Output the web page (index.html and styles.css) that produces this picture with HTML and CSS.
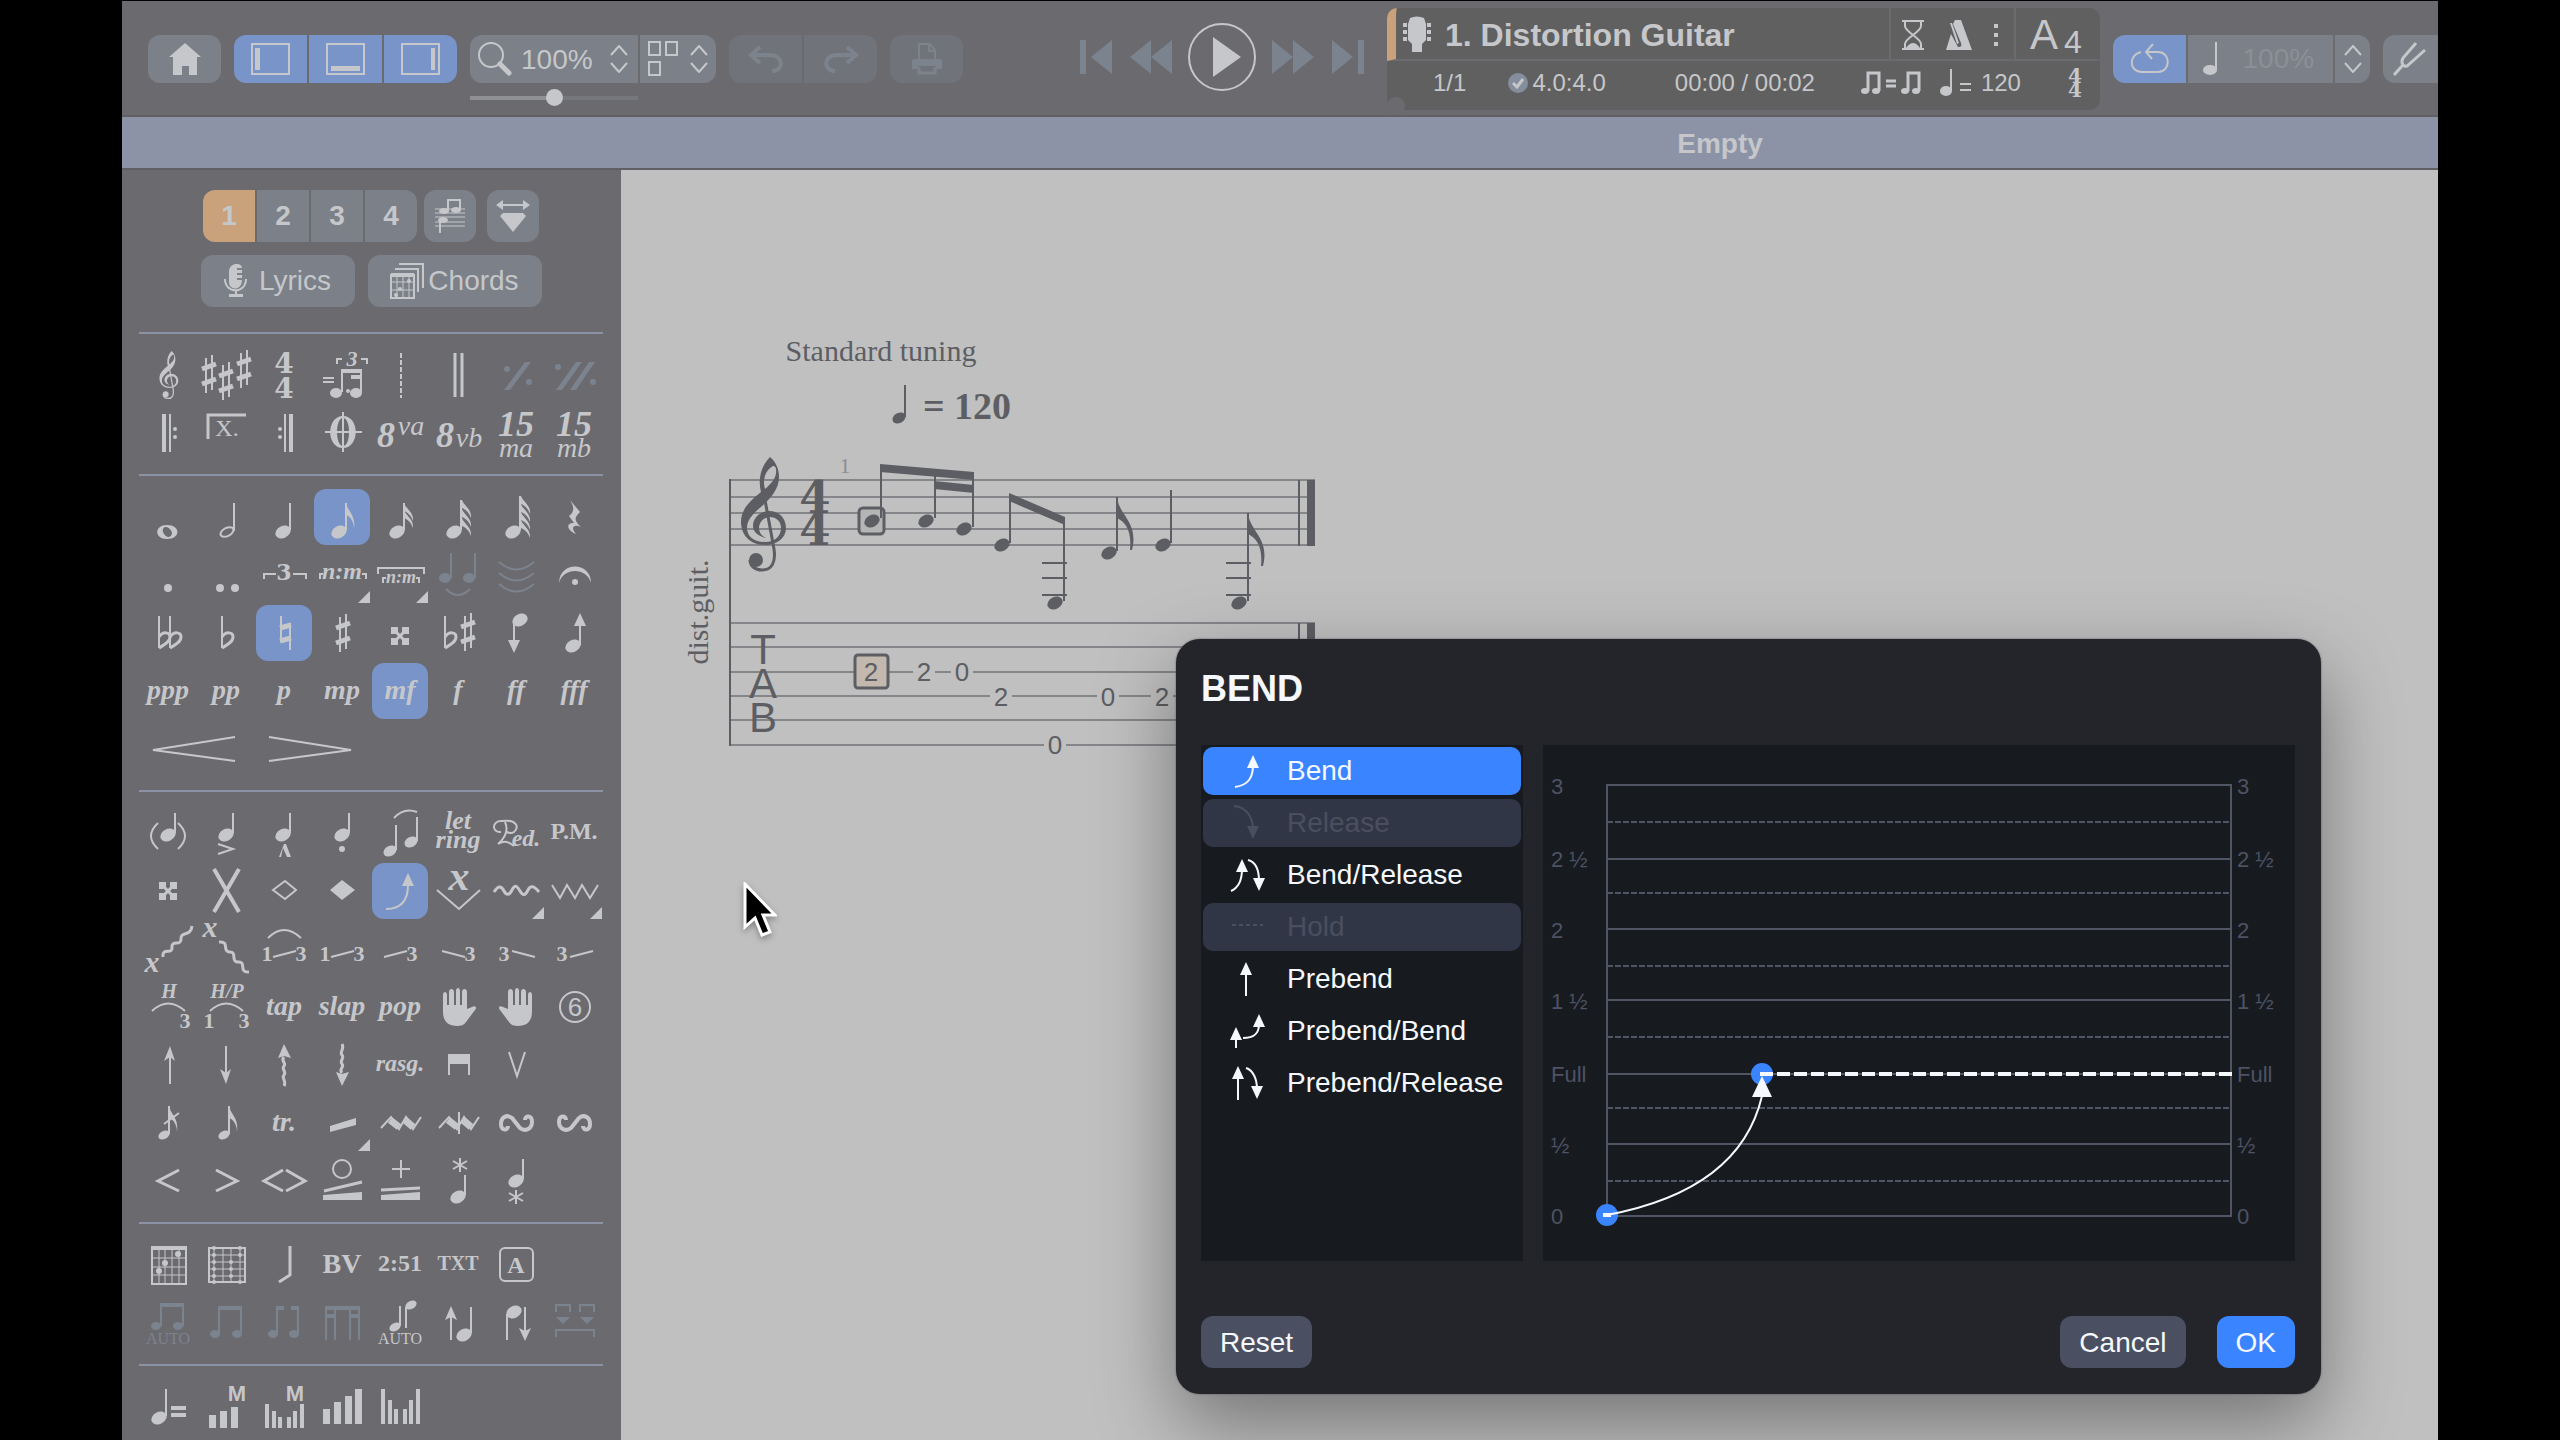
FILE: index.html
```html
<!DOCTYPE html>
<html lang="en">
<head>
    <meta charset="UTF-8">
    <meta name="viewport" content="width=device-width, initial-scale=1.0">
    <title>Empty</title>
    <link rel="stylesheet" href="styles.css">
</head>
<body>
    <!-- Shared note shapes -->
    <svg class="sprite" width="0" height="0">
        <defs>
            <ellipse id="head" class="f" rx="8" ry="6" transform="rotate(-28)"/>
            <g id="q"><use href="#head"/><path d="M7 -2V-29"/></g>
            <g id="qs"><use href="#head"/><path d="M7 -2V-22"/></g>
            <path id="flag" class="f" d="M0 0C2 9 10 12 8 26C8 17 3 13 0 12Z"/>
            <path id="flag-s" class="f" d="M0 0C2 6 10 9 9 18C7 12 3 9 0 8Z"/>
            <g id="sharp"><path d="M-3 -16V19M3 -19V16"/><path stroke-width="5" d="M-7 -5L7 -10M-7 10L7 5"/></g>
            <g id="flat"><path d="M0 -32V0"/><path stroke-width="3" d="M0 -11C4 -17 11 -16 11 -11C11 -6 5 -3 0 0"/></g>
            <g id="dsharp"><path stroke-width="3" d="M-6 -6L6 6M-6 6L6 -6"/><path class="f" d="M-9 -9h7v5l-3 2h-4zM9 -9h-7v5l3 2h4zM-9 9h7v-5l-3 -2h-4zM9 9h-7v-5l3 -2h4z"/></g>
            <path id="up" class="f" d="M0 0L-6 13H6Z"/>
            <path id="down" class="f" d="M0 0L-6 -13H6Z"/>
            <path id="corner" class="f" d="M44 56H56V44Z"/>
            <path id="star" d="M0 -7V7M-7 -4L7 4M-7 4L7 -4"/>
            <path id="hand" class="f" d="M13 16c0-4 4-4 4 0v10h2v-13c0-4 5-4 5 0v13h2v-14c0-4 4-4 4 0v14h2v-13c0-4 5-4 5 0v17l5-2c4-2 5 1 3 3l-9 12c-2 3-5 4-9 4c-9 0-14-5-14-14z"/>
            <path id="turn" stroke-width="4" d="M20 25C20 20 13 20 13 27C13 34 20 37 25 33L33 23C38 19 44 22 44 29C44 36 37 36 37 31"/>
            <g id="mordent"><path d="M9 33L19 22L27 34L34 22L41 34L49 22"/><path stroke-width="7" d="M18 25L27 32M33 25L41 32"/></g>
            <g id="clef">
                <path class="f" fill-rule="evenodd" d="M30 0C36 5 39 12 39 20C39 32 31 41 22 49C14 56 7 62 7 71C7 80 15 85 25 85C36 85 41 78 41 71C41 64 36 60 30 60C24 60 19 65 19 71C19 76 22 79 26 81C18 79 13 75 13 69C13 61 20 54 29 54C39 54 46 61 46 71C46 81 37 88 25 88C10 88 1 78 1 65C1 52 10 44 21 35C18 24 20 10 30 0ZM33 9C26 13 22 22 25 32C32 26 37 20 36 13C36 10 35 9 33 9Z"/>
                <path stroke-width="3" d="M23 32L34 92C36 105 32 113 22 113C15 113 10 109 10 103"/>
                <circle class="f" cx="16" cy="103" r="7"/>
            </g>
            <path id="chevrons" d="M2 10L10 1L18 10M2 18L10 27L18 18"/>
        </defs>
    </svg>

    <div class="app">
        <header class="toolbar">
            <button class="btn home" aria-label="Home">
                <svg width="34" height="34"><path class="f" d="M17 1L33 15H29V33H21V24H14V33H5V15H1Z"/></svg>
            </button>
            <div class="group">
                <button class="btn on" aria-label="Palette"><svg width="40" height="32"><path d="M1 1H38V31H1Z"/><path class="f" d="M4 5H9V27H4Z"/></svg></button>
                <button class="btn on" aria-label="Tracks"><svg width="40" height="32"><path d="M1 1H38V31H1Z"/><path class="f" d="M5 23H34V28H5Z"/></svg></button>
                <button class="btn on" aria-label="Inspector"><svg width="40" height="32"><path d="M1 1H38V31H1Z"/><path class="f" d="M30 5H34V27H30Z"/></svg></button>
            </div>
            <div class="zoom">
                <div class="group">
                    <label class="btn zoom-level">
                        <svg width="36" height="36"><circle cx="14" cy="14" r="12"/><path stroke-width="5" stroke-linecap="round" d="M23 23L32 32"/></svg>
                        <select aria-label="Zoom"><option>100%</option></select>
                        <svg width="20" height="28"><use href="#chevrons"/></svg>
                    </label>
                    <button class="btn layout" aria-label="Page layout">
                        <svg width="30" height="36"><path d="M1 1H12V14H1ZM18 1H29V14H18ZM1 21H12V34H1Z"/></svg>
                        <svg width="20" height="28"><use href="#chevrons"/></svg>
                    </button>
                </div>
                <input type="range" aria-label="Zoom slider" value="50">
            </div>
            <div class="group">
                <button class="btn off" aria-label="Undo" disabled><svg width="36" height="28"><path stroke-width="4" d="M12 2L3 10L12 18M3 10H22C36 10 36 26 24 26"/></svg></button>
                <button class="btn off" aria-label="Redo" disabled><svg width="36" height="28"><path stroke-width="4" d="M24 2L33 10L24 18M33 10H14C0 10 0 26 12 26"/></svg></button>
            </div>
            <button class="btn off print" aria-label="Print" disabled>
                <svg width="32" height="32"><path d="M8 16V1H19L24 7V16M18 1V8H24"/><path class="f" d="M3 16H29Q31 16 31 18V26H25V23H7V26H1V18Q1 16 3 16Z"/><path stroke-width="3" d="M8 24V30H24V24"/></svg>
            </button>

            <div class="transport">
                <button aria-label="First bar"><svg width="34" height="36"><path class="f" d="M1 1H7V35H1ZM33 1V35L12 18Z"/></svg></button>
                <button aria-label="Rewind"><svg width="42" height="36"><path class="f" d="M21 1V35L0 18ZM42 1V35L21 18Z"/></svg></button>
                <button class="play" aria-label="Play"><svg width="70" height="70"><circle cx="35" cy="35" r="33"/><path class="f" d="M26 15V55L54 35Z"/></svg></button>
                <button aria-label="Forward"><svg width="42" height="36"><path class="f" d="M0 1V35L21 18ZM21 1V35L42 18Z"/></svg></button>
                <button aria-label="Last bar"><svg width="34" height="36"><path class="f" d="M27 1H33V35H27ZM1 1V35L22 18Z"/></svg></button>
            </div>

            <div class="display">
                <div class="track">
                    <svg class="guitar" width="28" height="36"><path class="f" d="M7 2Q14 -1 21 2L23 8V24L19 28V36H9V28L5 24V8ZM0 7H4V11H0ZM0 14H4V18H0ZM0 21H4V25H0ZM24 7H28V11H24ZM24 14H28V18H24ZM24 21H28V25H24Z"/></svg>
                    <h1>1. Distortion Guitar</h1>
                    <div class="options">
                        <svg width="24" height="32"><path d="M1 2H23M1 30H23M4 2V7C4 13 20 19 20 25V30M20 2V7C20 13 4 19 4 25V30"/><path class="f" d="M5 29Q12 19 19 29Z"/></svg>
                        <svg width="28" height="32"><path class="f" fill-rule="evenodd" d="M10 1H16L27 31H1L6 15L13 28C16 28 17 27 16 24L8 5ZM5 4L7 4L14 24L12 25Z"/></svg>
                        <svg width="6" height="24"><path class="f" d="M1 1h4v4h-4zM1 10h4v4h-4zM1 19h4v4h-4z"/></svg>
                    </div>
                    <div class="pitch">A<sub>4</sub></div>
                </div>
                <div class="status">
                    <span class="bar">1/1</span>
                    <svg width="22" height="20"><circle class="check" cx="11" cy="10" r="10"/><path stroke-width="3" d="M6 10L10 14L16 6"/></svg>
                    <span class="beat">4.0:4.0</span>
                    <span class="time">00:00 / 00:02</span>
                    <svg class="swing" width="62" height="26"><path stroke-width="3" d="M7 21V3H18V21M47 21V3H58V21M25 11H35M25 16H35"/><g class="f"><ellipse cx="4" cy="21" rx="4" ry="3"/><ellipse cx="15" cy="21" rx="4" ry="3"/><ellipse cx="44" cy="21" rx="4" ry="3"/><ellipse cx="55" cy="21" rx="4" ry="3"/></g></svg>
                    <svg width="32" height="28"><ellipse class="f" cx="6" cy="22" rx="6" ry="5"/><path d="M11 22V0M20 15H31M20 21H31"/></svg>
                    <span class="tempo">120</span>
                    <span class="meter">4<br>4</span>
                </div>
                <i class="grip"></i>
            </div>

            <div class="group speed">
                <button class="btn on" aria-label="Loop"><svg width="40" height="40"><path d="M11 13C-2 16 -1 33 12 33H28C41 33 41 13 28 13H16M23 5L16 13L22 20"/></svg></button>
                <label class="btn rate"><svg width="18" height="36"><ellipse class="f" cx="7" cy="29" rx="7" ry="5"/><path d="M13 29V1"/></svg><input type="text" aria-label="Speed" value="100%"></label>
                <button class="btn step" aria-label="Change speed"><svg width="20" height="28"><use href="#chevrons"/></svg></button>
            </div>
            <button class="btn tuner" aria-label="Tuner"><svg width="36" height="36"><path stroke-width="3" d="M1 34L10 24M23 2L10 17C8 21 9 26 14 25L32 9"/></svg></button>
        </header>

        <div class="titlebar">Empty</div>

        <main>
            <aside class="palette">
                <div class="voices">
                    <div class="group">
                        <button class="btn voice active">1</button>
                        <button class="btn voice">2</button>
                        <button class="btn voice">3</button>
                        <button class="btn voice">4</button>
                    </div>
                    <button class="btn square" aria-label="Multivoice"><svg width="32" height="36"><path stroke-width="1" d="M1 11H31M1 15H31M1 19H31M1 24H31M1 28H31"/><path d="M14 13V2H26V12M6 35V24L11 22"/><g class="f"><ellipse cx="10" cy="13" rx="5" ry="3"/><ellipse cx="22" cy="12" rx="5" ry="3"/><ellipse cx="9" cy="22" rx="5" ry="3"/></g></svg></button>
                    <button class="btn square design" aria-label="Design mode"><svg width="34" height="32"><path d="M3 5H31"/><path class="f" d="M0 5L7 0V10ZM34 5L27 0V10ZM7 13H27L30 16L17 32L4 16Z"/></svg></button>
                </div>
                <div class="texts">
                    <button class="btn lyrics"><svg width="24" height="34"><path class="f" d="M5 8C5 -2 18 -2 18 4H13V6H18V9H13V11H18V14H13V16H18C18 27 5 27 5 18ZM5 30H19V33H5Z"/><path d="M1 15C1 30 22 30 22 15M12 26V31"/></svg>Lyrics</button>
                    <button class="btn chords"><svg width="34" height="36"><path stroke-width="1" d="M7 12V35M13 12V35M19 12V35M1 19H24M1 27H24"/><path d="M1 12H24V35H1ZM5 6H28V29M9 1H33V25"/><path class="f" d="M1 10H24V14H1Z"/><g class="f"><circle cx="19" cy="18" r="2"/><circle cx="10" cy="26" r="2"/><circle cx="6" cy="32" r="2"/></g></svg>Chords</button>
                </div>

                <section>
                    <button class="tool" title="Clef"><svg><use href="#clef" transform="translate(19 4) scale(.42)"/></svg></button>
                    <button class="tool" title="Key signature"><svg><use href="#sharp" x="11" y="27"/><use href="#sharp" x="28" y="34"/><use href="#sharp" x="46" y="22"/></svg></button>
                    <button class="tool" title="Time signature"><svg><text class="num" x="28" y="26">4</text><text class="num" x="28" y="51">4</text></svg></button>
                    <button class="tool" title="Triplet feel"><svg><path d="M9 31H20M9 35H20M23 17V12H28M53 17V12H47M28 45V24M47 45V24"/><path stroke-width="4" d="M27 24H48M37 30H48"/><ellipse class="f" cx="22" cy="46" rx="6" ry="5"/><ellipse class="f" cx="42" cy="46" rx="6" ry="5"/><circle class="f" cx="34" cy="44" r="2"/><text class="bi s22" x="38" y="19">3</text></svg></button>
                    <button class="tool" title="Free time"><svg><path stroke-dasharray="5 2" d="M29 6V51"/></svg></button>
                    <button class="tool" title="Double bar"><svg><path stroke-width="3" d="M25 6V50M32 6V50"/></svg></button>
                    <button class="tool" title="Simile mark" disabled><svg><path class="f" d="M16 43H22L43 15H37Z"/><circle class="f" cx="19" cy="22" r="3"/><circle class="f" cx="41" cy="35" r="3"/></svg></button>
                    <button class="tool" title="Double simile mark" disabled><svg><path class="f" d="M10 43H16L36 15H30ZM24 43H30L49 15H43Z"/><circle class="f" cx="12" cy="20" r="3"/><circle class="f" cx="47" cy="35" r="3"/></svg></button>

                    <button class="tool" title="Repeat open"><svg><path class="f" d="M22 9H26V47H22Z"/><path d="M30 9V47"/><circle class="f" cx="35" cy="24" r="2"/><circle class="f" cx="35" cy="32" r="2"/></svg></button>
                    <button class="tool" title="Alternate ending"><svg><path stroke-width="3" d="M10 34V10H48"/><text class="rm s24" x="29" y="31">X.</text></svg></button>
                    <button class="tool" title="Repeat close"><svg><path class="f" d="M33 9H37V47H33Z"/><path d="M29 9V47"/><circle class="f" cx="24" cy="24" r="2"/><circle class="f" cx="24" cy="32" r="2"/></svg></button>
                    <button class="tool" title="Coda"><svg><path class="f" fill-rule="evenodd" d="M29 11C46 11 46 43 29 43C12 43 12 11 29 11ZM29 13C21 13 21 41 29 41C37 41 37 13 29 13Z"/><path d="M11 27H48M29 7V47"/></svg></button>
                    <button class="tool" title="Octave up"><svg><text class="bi s36" x="14" y="42">8</text><text class="it s28" x="39" y="30">va</text></svg></button>
                    <button class="tool" title="Octave down"><svg><text class="bi s36" x="15" y="42">8</text><text class="it s28" x="39" y="42">vb</text></svg></button>
                    <button class="tool" title="Two octaves up"><svg><text class="bi s36" x="28" y="31">15</text><text class="it s28" x="28" y="52">ma</text></svg></button>
                    <button class="tool" title="Two octaves down"><svg><text class="bi s36" x="28" y="31">15</text><text class="it s28" x="28" y="52">mb</text></svg></button>
                </section>

                <section>
                    <button class="tool" title="Whole"><svg><path class="f" fill-rule="evenodd" d="M27 36C41 36 41 50 27 50C14 50 14 36 27 36ZM25 38C20 40 24 48 29 48C35 46 31 38 25 38Z"/></svg></button>
                    <button class="tool" title="Half"><svg><ellipse cx="29" cy="43" rx="7" ry="4" transform="rotate(-28 29 43)"/><path d="M36 42V14"/></svg></button>
                    <button class="tool" title="Quarter"><svg><use href="#q" x="27" y="43"/></svg></button>
                    <button class="tool on" title="Eighth"><svg><use href="#q" x="25" y="43"/><use href="#flag" x="32" y="14"/></svg></button>
                    <button class="tool" title="Sixteenth"><svg><use href="#q" x="25" y="43"/><use href="#flag-s" x="32" y="14"/><use href="#flag-s" x="32" y="21"/></svg></button>
                    <button class="tool" title="Thirty-second"><svg><use href="#q" x="24" y="43"/><path d="M31 41V11"/><use href="#flag-s" x="32" y="11"/><use href="#flag-s" x="32" y="20"/><use href="#flag-s" x="32" y="29"/></svg></button>
                    <button class="tool" title="Sixty-fourth"><svg><use href="#q" x="25" y="43"/><path d="M32 41V7"/><use href="#flag-s" x="33" y="7"/><use href="#flag-s" x="33" y="15"/><use href="#flag-s" x="33" y="23"/><use href="#flag-s" x="33" y="31"/></svg></button>
                    <button class="tool" title="Rest"><svg><path class="f" d="M24 11L34 23C28 29 28 31 35 38C28 35 24 38 30 45C20 41 20 33 28 34L23 27C29 22 28 18 24 11Z"/></svg></button>

                    <button class="tool" title="Dotted"><svg><circle class="f" cx="28" cy="41" r="4"/></svg></button>
                    <button class="tool" title="Double dotted"><svg><circle class="f" cx="22" cy="41" r="4"/><circle class="f" cx="37" cy="41" r="4"/></svg></button>
                    <button class="tool" title="Triplet"><svg><path stroke-width="2" d="M8 32V27H20M50 32V27H37"/><text class="num s22" x="28" y="33">3</text></svg></button>
                    <button class="tool" title="Tuplet"><svg><path d="M6 32V27H9M52 32V27H48"/><text class="bi s24" x="28" y="32">n:m</text><use href="#corner"/></svg></button>
                    <button class="tool" title="Tuplet bracket"><svg><path d="M6 27V21H52V27M11 36V31H14M47 36V31H44"/><text class="bi s18" x="29" y="36">n:m</text><use href="#corner"/></svg></button>
                    <button class="tool" title="Tie" disabled><svg><ellipse class="f" cx="15" cy="31" rx="6" ry="5"/><ellipse class="f" cx="39" cy="31" rx="6" ry="5"/><path d="M21 31V6M45 31V6M16 42Q28 54 40 42"/></svg></button>
                    <button class="tool" title="Tie all" disabled><svg><path d="M11 15Q28 30 46 15M11 26Q28 41 46 26M11 37Q28 52 46 37"/></svg></button>
                    <button class="tool" title="Fermata"><svg><path class="f" d="M13 36C13 14 45 14 45 36C41 20 17 20 13 36Z"/><circle class="f" cx="29" cy="35" r="3"/></svg></button>

                    <button class="tool" title="Double flat"><svg><use href="#flat" x="19" y="43"/><use href="#flat" x="30" y="43"/></svg></button>
                    <button class="tool" title="Flat"><svg><use href="#flat" x="24" y="43"/></svg></button>
                    <button class="tool on" title="Natural"><svg><path stroke-width="2" d="M25 11V37M34 18V45"/><path stroke-width="5" d="M24 23L35 20M24 36L35 33"/></svg></button>
                    <button class="tool" title="Sharp"><svg><use href="#sharp" x="29" y="28"/></svg></button>
                    <button class="tool" title="Double sharp"><svg><use href="#dsharp" x="28" y="31"/></svg></button>
                    <button class="tool" title="Enharmonic"><svg><use href="#flat" x="15" y="43"/><use href="#sharp" x="38" y="27"/></svg></button>
                    <button class="tool" title="Lower semitone"><svg><use href="#head" x="32" y="15"/><path d="M26 17V38"/><use href="#down" x="26" y="48"/></svg></button>
                    <button class="tool" title="Raise semitone"><svg><use href="#head" x="27" y="41"/><path d="M34 40V18"/><use href="#up" x="34" y="8"/></svg></button>

                    <button class="tool dyn">ppp</button>
                    <button class="tool dyn">pp</button>
                    <button class="tool dyn">p</button>
                    <button class="tool dyn">mp</button>
                    <button class="tool dyn on">mf</button>
                    <button class="tool dyn">f</button>
                    <button class="tool dyn">ff</button>
                    <button class="tool dyn">fff</button>

                    <button class="tool wide" title="Crescendo"><svg><path d="M95 16L13 29L95 40"/></svg></button>
                    <button class="tool wide" title="Decrescendo"><svg><path d="M13 16L95 29L13 40"/></svg></button>
                </section>

                <section>
                    <button class="tool" title="Ghost note"><svg><use href="#qs" x="28" y="30"/><path d="M18 18Q4 31 18 44M38 18Q52 31 38 44"/></svg></button>
                    <button class="tool" title="Accent"><svg><use href="#qs" x="28" y="30"/><path d="M20 39L35 44L20 49"/></svg></button>
                    <button class="tool" title="Heavy accent"><svg><use href="#qs" x="27" y="30"/><path class="f" d="M23 52L28 39H30L35 52H31L27 43L25 52Z"/></svg></button>
                    <button class="tool" title="Staccato"><svg><use href="#qs" x="28" y="30"/><circle class="f" cx="28" cy="44" r="3"/></svg></button>
                    <button class="tool" title="Legato"><svg><ellipse class="f" cx="18" cy="46" rx="7" ry="5" transform="rotate(-28 18 46)"/><ellipse class="f" cx="39" cy="37" rx="7" ry="5" transform="rotate(-28 39 37)"/><path d="M24 45V20M45 36V12M22 13Q32 2 45 7"/></svg></button>
                    <button class="tool" title="Let ring"><svg><text class="bi s26" x="28" y="24">let</text><text class="bi s26" x="28" y="43">ring</text></svg></button>
                    <button class="tool" title="Sustain pedal"><svg><path d="M13 27C3 28 4 15 14 16C28 14 32 22 26 27C23 29 19 27 19 27M17 17C21 26 17 33 10 39C17 35 21 37 26 41"/><text class="bi s24" x="38" y="41">ed.</text></svg></button>
                    <button class="tool bold s24">P.M.</button>

                    <button class="tool" title="Dead note"><svg><use href="#dsharp" x="28" y="28"/></svg></button>
                    <button class="tool" title="Dead slap"><svg><path stroke-width="4" d="M16 6L41 49M41 6L16 49"/></svg></button>
                    <button class="tool" title="Natural harmonic"><svg><path d="M17 27L29 18L40 27L29 36Z"/></svg></button>
                    <button class="tool" title="Artificial harmonic"><svg><path class="f" d="M16 27L28 17L41 27L28 37Z"/></svg></button>
                    <button class="tool on" title="Bend"><svg><path d="M14 46C30 46 36 36 36 22"/><use href="#up" x="36" y="10"/></svg></button>
                    <button class="tool" title="Whammy bar"><svg><text class="bi s42" x="29" y="27">x</text><path d="M7 27L29 46L50 27"/></svg></button>
                    <button class="tool" title="Vibrato"><svg><path stroke-width="3" d="M6 29C11 21 14 24 16 28S21 33 24 27S29 23 32 28S37 33 40 27S47 24 51 29"/><use href="#corner"/></svg></button>
                    <button class="tool" title="Wide vibrato"><svg><path d="M6 22L14 35L21 22L29 35L36 22L44 35L52 22"/><use href="#corner"/></svg></button>

                    <button class="tool" title="Slide in from below"><svg><text class="bi s30" x="12" y="51">x</text><path stroke-width="3" d="M23 36C22 26 32 34 32 27C31 18 41 26 41 18C40 10 51 16 52 5"/></svg></button>
                    <button class="tool" title="Slide out downwards"><svg><text class="bi s30" x="12" y="16">x</text><path stroke-width="3" d="M21 21C32 20 24 30 31 31C40 30 32 41 40 41C49 40 40 52 51 51"/></svg></button>
                    <button class="tool" title="Legato slide"><svg><path d="M12 17Q28 1 45 17M17 36L40 30"/><text class="bo s22" x="11" y="40">1</text><text class="bo s22" x="45" y="40">3</text></svg></button>
                    <button class="tool" title="Shift slide"><svg><path d="M17 36L40 30"/><text class="bo s22" x="11" y="40">1</text><text class="bo s22" x="45" y="40">3</text></svg></button>
                    <button class="tool" title="Slide in below"><svg><path d="M12 36L35 30"/><text class="bo s22" x="40" y="40">3</text></svg></button>
                    <button class="tool" title="Slide in above"><svg><path d="M12 30L35 36"/><text class="bo s22" x="40" y="40">3</text></svg></button>
                    <button class="tool" title="Slide out down"><svg><path d="M24 30L47 36"/><text class="bo s22" x="16" y="40">3</text></svg></button>
                    <button class="tool" title="Slide out up"><svg><path d="M24 36L47 30"/><text class="bo s22" x="16" y="40">3</text></svg></button>

                    <button class="tool" title="Hammer on"><svg><text class="bi s20" x="29" y="19">H</text><path d="M12 32Q28 17 45 32"/><text class="bo s22" x="45" y="49">3</text></svg></button>
                    <button class="tool" title="Hammer / pull"><svg><text class="bi s20" x="29" y="19">H/P</text><path d="M12 32Q28 17 45 32"/><text class="bo s22" x="11" y="49">1</text><text class="bo s22" x="46" y="49">3</text></svg></button>
                    <button class="tool dyn">tap</button>
                    <button class="tool dyn">slap</button>
                    <button class="tool dyn">pop</button>
                    <button class="tool" title="Left hand"><svg><use href="#hand"/></svg></button>
                    <button class="tool" title="Right hand"><svg><use href="#hand" transform="matrix(-1 0 0 1 57 0)"/></svg></button>
                    <button class="tool" title="String number"><svg><circle cx="29" cy="28" r="15"/><text class="sans s26" x="29" y="37">6</text></svg></button>

                    <button class="tool" title="Arpeggio up"><svg><path d="M30 47V18"/><path class="f" d="M30 9L24 24L30 20L35 24Z"/></svg></button>
                    <button class="tool" title="Arpeggio down"><svg><path d="M28 9V40"/><path class="f" d="M28 47L22 32L28 36L33 32Z"/></svg></button>
                    <button class="tool" title="Brush up"><svg><path class="f" d="M28 7L22 21L28 19L35 21Z"/><path stroke-width="3" d="M28 20C24 24 31 26 28 29S31 35 28 38S31 44 28 49"/></svg></button>
                    <button class="tool" title="Brush down"><svg><path class="f" d="M28 49L22 35L28 37L35 35Z"/><path stroke-width="3" d="M28 36C24 32 31 30 28 27S31 21 28 18S31 12 28 7"/></svg></button>
                    <button class="tool dyn s24">rasg.</button>
                    <button class="tool" title="Downstroke"><svg><path class="f" d="M18 17H40V38H38V27H20V38H18Z"/></svg></button>
                    <button class="tool" title="Upstroke"><svg><path stroke-width="2" d="M21 15L29 39L37 15"/></svg></button>
                    <span></span>

                    <button class="tool" title="Grace before beat"><svg><ellipse class="f" cx="24" cy="40" rx="6" ry="4" transform="rotate(-28 24 40)"/><path d="M29 39V11M24 29L39 18"/><use href="#flag" x="29" y="11"/></svg></button>
                    <button class="tool" title="Grace on beat"><svg><ellipse class="f" cx="26" cy="40" rx="6" ry="4" transform="rotate(-28 26 40)"/><path d="M31 39V11"/><use href="#flag" x="31" y="11"/></svg></button>
                    <button class="tool dyn">tr.</button>
                    <button class="tool" title="Tremolo picking"><svg><path class="f" d="M16 31L42 23V30L16 37Z"/><use href="#corner"/></svg></button>
                    <button class="tool" title="Upper mordent"><svg><use href="#mordent"/></svg></button>
                    <button class="tool" title="Lower mordent"><svg><use href="#mordent"/><path d="M29 17V39"/></svg></button>
                    <button class="tool" title="Turn"><svg><use href="#turn" transform="matrix(-1 0 0 1 57 0)"/></svg></button>
                    <button class="tool" title="Inverted turn"><svg><use href="#turn"/></svg></button>

                    <button class="tool" title="Fade in"><svg><path stroke-width="3" d="M39 17L18 28L39 38"/></svg></button>
                    <button class="tool" title="Fade out"><svg><path stroke-width="3" d="M18 17L39 28L18 38"/></svg></button>
                    <button class="tool" title="Volume swell"><svg><path stroke-width="3" d="M27 17L8 28L27 38M30 17L49 28L30 38"/></svg></button>
                    <button class="tool" title="Wah open"><svg><circle cx="28" cy="16" r="9"/><path stroke-width="3" d="M10 38L48 29"/><path class="f" d="M9 42L48 39V47H9Z"/></svg></button>
                    <button class="tool" title="Wah close"><svg><path d="M20 16H38M29 7V25"/><path stroke-width="3" d="M9 37L48 35"/><path class="f" d="M9 42L48 39V47H9Z"/></svg></button>
                    <button class="tool" title="Pedal up"><svg><use href="#star" x="30" y="12"/><use href="#qs" x="28" y="44"/></svg></button>
                    <button class="tool" title="Pedal down"><svg><use href="#star" x="28" y="44"/><use href="#qs" x="28" y="28"/></svg></button>
                </section>

                <section>
                    <button class="tool" title="Chord"><svg><path stroke-width="1" d="M12 21H46M12 30H46M12 38H46M19 12V47M25 12V47M32 12V47M39 12V47"/><path d="M12 10V47H46V10"/><path class="f" d="M11 9H47V13H11Z"/><g class="f"><circle cx="38" cy="17" r="3"/><circle cx="25" cy="26" r="3"/><circle cx="19" cy="34" r="3"/></g></svg></button>
                    <button class="tool" title="Scale"><svg><path stroke-width="1" d="M11 18H47M11 25H47M11 32H47M11 39H47M16 11V45M25 11V45M33 11V45M42 11V45"/><path d="M11 11H47V45H11Z"/><g class="f"><circle cx="16" cy="11" r="2"/><circle cx="16" cy="18" r="2"/><circle cx="16" cy="25" r="2"/><circle cx="16" cy="32" r="2"/><circle cx="16" cy="39" r="2"/><circle cx="16" cy="45" r="2"/><circle cx="33" cy="25" r="2"/><circle cx="33" cy="32" r="2"/><circle cx="33" cy="39" r="2"/><circle cx="42" cy="11" r="2"/><circle cx="42" cy="18" r="2"/><circle cx="42" cy="45" r="2"/></g></svg></button>
                    <button class="tool" title="Slash rhythm"><svg><path stroke-width="3" d="M34 9V38L23 45"/></svg></button>
                    <button class="tool bold s28">BV</button>
                    <button class="tool bold s24">2:51</button>
                    <button class="tool bold s20">TXT</button>
                    <button class="tool" title="Section"><svg><rect x="12" y="11" width="33" height="33" rx="5"/><text class="bo s24" x="28" y="36">A</text></svg></button>
                    <span></span>

                    <button class="tool" title="Automatic beaming" disabled><svg><ellipse class="f" cx="16" cy="31" rx="5" ry="4"/><ellipse class="f" cx="38" cy="31" rx="5" ry="4"/><path d="M21 31V10M43 31V10"/><path stroke-width="4" d="M20 10H44"/><text class="rm s16" x="28" y="49">AUTO</text></svg></button>
                    <button class="tool" title="Beam" disabled><svg><ellipse class="f" cx="17" cy="39" rx="5" ry="4"/><ellipse class="f" cx="39" cy="39" rx="5" ry="4"/><path d="M21 39V13M43 39V13"/><path stroke-width="4" d="M20 13H44"/></svg></button>
                    <button class="tool" title="Break beam" disabled><svg><ellipse class="f" cx="17" cy="39" rx="5" ry="4"/><ellipse class="f" cx="38" cy="39" rx="5" ry="4"/><path d="M21 39V13M42 39V13"/><path stroke-width="4" d="M20 13H28M35 13H43"/></svg></button>
                    <button class="tool" title="Break secondary beam" disabled><svg><path d="M12 12V45M21 12V45M36 12V45M45 12V45"/><path stroke-width="4" d="M11 13H46M12 21H22M36 21H46"/></svg></button>
                    <button class="tool" title="Automatic stems"><svg><ellipse class="f" cx="23" cy="32" rx="6" ry="4" transform="rotate(-28 23 32)"/><ellipse class="f" cx="39" cy="10" rx="6" ry="4" transform="rotate(-28 39 10)"/><path d="M28 31V11M34 12V33"/><text class="rm s16" x="28" y="49">AUTO</text></svg></button>
                    <button class="tool" title="Stem up"><svg><use href="#head" x="34" y="40"/><path d="M41 38V12M21 45V18"/><path class="f" d="M21 11L15 25L21 22L27 25Z"/></svg></button>
                    <button class="tool" title="Stem down"><svg><use href="#head" x="26" y="17"/><path d="M19 19V45M37 12V40"/><path class="f" d="M37 46L31 33L37 36L43 33Z"/></svg></button>
                    <button class="tool" title="Bracket" disabled><svg><path d="M10 17V10H24V17M34 17V10H48V17M10 42V35H48V42"/><path class="f" d="M10 22H24L17 29ZM34 22H48L41 29Z"/></svg></button>
                </section>

                <section>
                    <button class="tool" title="Tempo automation"><svg><use href="#q" x="19" y="39"/><path stroke-width="4" d="M31 29H46M31 36H46"/></svg></button>
                    <button class="tool" title="Master volume"><svg><path class="f" d="M11 36H18V49H11ZM22 32H29V49H22ZM33 28H40V49H33Z"/><text class="sans-b s22" x="39" y="22">M</text></svg></button>
                    <button class="tool" title="Master pan"><svg><path class="f" d="M9 25h4v24h-4zM16 32h4v17h-4zM22 38h4v11h-4zM31 38h4v11h-4zM37 32h4v17h-4zM44 25h4v24h-4z"/><text class="sans-b s22" x="39" y="22">M</text></svg></button>
                    <button class="tool" title="Volume"><svg><path class="f" d="M9 30h7v15h-7zM20 23h7v22h-7zM31 17h7v28h-7zM41 10h7v35h-7z"/></svg></button>
                    <button class="tool" title="Pan"><svg><path class="f" d="M9 10h4v35h-4zM16 21h4v24h-4zM22 30h4v15h-4zM31 30h4v15h-4zM37 21h4v24h-4zM44 10h4v35h-4z"/></svg></button>
                </section>
            </aside>

            <div class="score">
                <svg class="system" viewBox="620 170 760 600" width="760" height="600">
                    <text class="rm s30" x="880" y="361">Standard tuning</text>
                    <ellipse class="f" cx="898" cy="418" rx="7" ry="5" transform="rotate(-28 898 418)"/>
                    <path d="M904 417V385"/>
                    <text class="bo s38" x="966" y="419">= 120</text>
                    <text class="rm s22 bar-number" x="844" y="473">1</text>
                    <text class="rm s30" transform="translate(707 612) rotate(-90)">dist.guit.</text>

                    <!-- staff and tablature lines -->
                    <path class="lines" d="M729 480H1314M729 497H1314M729 513H1314M729 529H1314M729 545H1314M729 623H1314M729 647H1314M729 672H1314M729 696H1314M729 720H1314M729 745H1314"/>
                    <path d="M729 479V746M1298 480V546M1298 623V745"/>
                    <path class="f" d="M1306 480H1314V546H1306ZM1306 623H1314V745H1306Z"/>
                    <use href="#clef" x="739" y="457"/>
                    <text class="num s45" x="814" y="513">4</text>
                    <text class="num s45" x="814" y="545">4</text>

                    <rect class="note-box" x="858" y="508" width="25" height="26" rx="4"/>
                    <g class="heads">
                        <use href="#head" x="871" y="521" /><use href="#head" x="925" y="521"/><use href="#head" x="963" y="529"/>
                        <use href="#head" x="1001" y="545"/><use href="#head" x="1054" y="603"/><use href="#head" x="1108" y="553"/>
                        <use href="#head" x="1162" y="545"/><use href="#head" x="1238" y="603"/>
                    </g>
                    <path d="M880 518V466M934 518V474M972 527V474M1009 543V496M1063 601V520M1116 551V497M1170 543V490M1247 601V513M1041 563H1066M1041 578H1066M1041 595H1066M1225 563H1250M1225 578H1250M1225 595H1250"/>
                    <path class="f" d="M879 464L973 472V480L879 472ZM933 481L973 485V493L933 489ZM1008 493L1064 517V525L1008 501Z"/>
                    <path class="f" d="M1116 497C1118 516 1138 522 1131 550H1129C1131 530 1124 522 1116 518ZM1247 513C1249 532 1269 538 1262 566H1260C1262 546 1255 538 1247 534Z"/>

                    <path class="gap" d="M912 660H934V684H912ZM950 660H972V684H950ZM989 684H1011V708H989ZM1043 733H1065V757H1043ZM1096 684H1118V708H1096ZM1150 684H1172V708H1150Z"/>
                    <rect class="tab-box" x="854" y="655" width="33" height="33" rx="3"/>
                    <text class="sans s26" x="870" y="681">2</text>
                    <text class="sans s26" x="923" y="681">2</text>
                    <text class="sans s26" x="961" y="681">0</text>
                    <text class="sans s26" x="1000" y="706">2</text>
                    <text class="sans s26" x="1054" y="754">0</text>
                    <text class="sans s26" x="1107" y="706">0</text>
                    <text class="sans s26" x="1161" y="706">2</text>
                    <text class="sans s42" x="762" y="664">T</text>
                    <text class="sans s42" x="762" y="698">A</text>
                    <text class="sans s42" x="762" y="732">B</text>
                </svg>
                <svg class="cursor" width="34" height="56"><path d="M2 2V45L12 36L19 53L27 50L20 33H32Z"/></svg>
            </div>
        </main>

        <div class="dialog" role="dialog" aria-labelledby="bend-title">
            <h2 id="bend-title">BEND</h2>
            <div class="panels">
                <div class="presets">
                    <button class="selected"><svg><path d="M19 40C33 38 37 30 37 18"/><use href="#up" x="37" y="8"/></svg>Bend</button>
                    <button disabled><svg><path d="M18 7C30 8 37 18 37 30"/><use href="#down" x="37" y="40"/></svg>Release</button>
                    <button><svg><path d="M15 40C24 36 26 28 26 18M32 9C40 11 43 20 43 30"/><use href="#up" x="26" y="8"/><use href="#down" x="43" y="40"/></svg>Bend/Release</button>
                    <button disabled><svg><path stroke-dasharray="4 3" d="M16 22H47"/></svg>Hold</button>
                    <button><svg><path d="M30 16V41"/><use href="#up" x="30" y="7"/></svg>Prebend</button>
                    <button><svg><path d="M20 28V41M27 31C38 31 43 27 43 17"/><use href="#up" x="20" y="20"/><use href="#up" x="43" y="7"/></svg>Prebend/Bend</button>
                    <button><svg><path d="M22 16V41M30 9C37 11 41 20 41 30"/><use href="#up" x="22" y="7"/><use href="#down" x="41" y="40"/></svg>Prebend/Release</button>
                </div>
                <svg class="curve" viewBox="1543 745 752 516">
                    <path class="grid" d="M1607 785H2231V1216H1607ZM1607 859H2231M1607 929H2231M1607 1000H2231M1607 1074H2231M1607 1144H2231"/>
                    <path class="grid" stroke-dasharray="6 2" d="M1607 822H2231M1607 893H2231M1607 966H2231M1607 1037H2231M1607 1108H2231M1607 1181H2231"/>
                    <g class="labels">
                        <text x="1551" y="794">3</text><text x="2237" y="794">3</text>
                        <text x="1551" y="867">2 ½</text><text x="2237" y="867">2 ½</text>
                        <text x="1551" y="938">2</text><text x="2237" y="938">2</text>
                        <text x="1551" y="1009">1 ½</text><text x="2237" y="1009">1 ½</text>
                        <text x="1551" y="1082">Full</text><text x="2237" y="1082">Full</text>
                        <text x="1551" y="1153">½</text><text x="2237" y="1153">½</text>
                        <text x="1551" y="1224">0</text><text x="2237" y="1224">0</text>
                    </g>
                    <circle class="point" cx="1607" cy="1215" r="11"/>
                    <circle class="point" cx="1762" cy="1074" r="11"/>
                    <path d="M1607 1215Q1740 1190 1762 1096"/>
                    <path stroke-width="4" d="M1603 1215H1611"/>
                    <path stroke-width="4" stroke-dasharray="13 4" d="M1760 1074H2233"/>
                    <path class="f" d="M1762 1076L1752 1097H1772Z"/>
                </svg>
            </div>
            <div class="actions">
                <button class="reset">Reset</button>
                <button>Cancel</button>
                <button class="ok">OK</button>
            </div>
        </div>
    </div>
</body>
</html>
```
FILE: styles.css
```css
* {
    box-sizing: border-box;
}
body {
    margin: 0;
    height: 100vh;
    padding: 1px 122px 0;
    overflow: hidden;
    background: #000;
    color: #c6c7ca;
    font-family: "Liberation Sans", Arial, sans-serif;
    font-size: 28px;
}
button, select, input {
    margin: 0;
    padding: 0;
    border: none;
    background: none;
    color: inherit;
    font: inherit;
}
svg {
    flex: none;
    fill: none;
    stroke: currentColor;
    stroke-width: 2;
}
.sprite {
    position: absolute;
}
.f {
    fill: currentColor;
    stroke: none;
}
text {
    fill: currentColor;
    stroke: none;
    text-anchor: middle;
    font-size: 28px;
}
.rm, .it, .bo, .bi {
    font-family: "Liberation Serif", serif;
}
.it, .bi {
    font-style: italic;
}
.bo, .bi, .sans-b {
    font-weight: bold;
}
.num {
    font-family: "DejaVu Serif", serif;
    font-weight: bold;
}
.s16 { font-size: 16px; }
.s18 { font-size: 18px; }
.s20 { font-size: 20px; }
.s22 { font-size: 22px; }
.s24 { font-size: 24px; }
.s26 { font-size: 26px; }
.s28 { font-size: 28px; }
.s30 { font-size: 30px; }
.s36 { font-size: 36px; }
.s38 { font-size: 38px; }
.s42 { font-size: 42px; }
.s45 { font-size: 45px; }

.app {
    position: relative;
    height: 100%;
    display: flex;
    flex-direction: column;
    overflow: hidden;
    background: #6b6a6f;
}

/* Toolbar */
.toolbar {
    flex: none;
    height: 116px;
    display: flex;
    align-items: center;
    gap: 13px;
    padding: 2px 0 0 26px;
    border-bottom: 2px solid #606064;
}
.group {
    display: flex;
    gap: 2px;
}
.group .btn {
    border-radius: 0;
}
.group .btn:first-child {
    border-radius: 12px 0 0 12px;
}
.group .btn:last-child {
    border-radius: 0 12px 12px 0;
}
.btn {
    flex: none;
    width: 73px;
    height: 48px;
    display: flex;
    align-items: center;
    justify-content: center;
    border-radius: 12px;
    background: #7b8089;
}
.btn.on {
    background: #7894c8;
}
.btn.off {
    background: #707379;
    color: #7d838d;
}
.zoom {
    height: 48px;
    display: flex;
    flex-direction: column;
    gap: 6px;
}
.zoom .zoom-level {
    width: 168px;
    justify-content: space-between;
    padding: 0 9px 0 7px;
}
select {
    appearance: none;
    width: 80px;
}
.zoom .layout {
    width: 76px;
    gap: 11px;
}
.zoom input {
    flex: none;
    appearance: none;
    width: 168px;
    height: 17px;
    background: linear-gradient(90deg, #8f9093 50%, #75777c 50%) center / 100% 4px no-repeat;
}
.zoom input::-webkit-slider-thumb {
    appearance: none;
    width: 17px;
    height: 17px;
    border-radius: 50%;
    background: #c6c7ca;
}
.transport {
    flex: 1;
    display: flex;
    align-items: center;
    justify-content: flex-end;
    gap: 17px;
    padding: 0 9px 4px 0;
    color: #7b838f;
}
.transport button, .transport svg {
    display: block;
}
.transport .play {
    color: #c6c7ca;
    margin: 0 -2px;
}
.display {
    position: relative;
    flex: none;
    width: 713px;
    height: 102px;
    border-radius: 10px;
    background: #606060;
    font-size: 24px;
}
.track {
    height: 53px;
    display: flex;
    align-items: center;
    border-bottom: 2px solid #6b6a6f;
    border-left: 9px solid #c9a27b;
    border-top-left-radius: 10px;
}
.track h1 {
    flex: 1;
    margin: 0 0 0 14px;
    padding-top: 3px;
    font-size: 32px;
}
.guitar {
    margin-left: 7px;
}
.options, .pitch {
    align-self: stretch;
    display: flex;
    align-items: center;
    padding-top: 3px;
    border-left: 2px solid #6b6a6f;
}
.options {
    width: 125px;
    gap: 20px;
    padding-left: 10px;
}
.pitch {
    width: 86px;
    padding-left: 14px;
    gap: 6px;
    font-size: 42px;
}
.pitch sub {
    padding-top: 14px;
    font-size: 32px;
}
.status {
    height: 47px;
    display: flex;
    align-items: center;
    padding: 0 18px 3px 46px;
}
.bar {
    margin-right: 41px;
}
.check {
    fill: #858e9c;
    stroke: none;
}
.beat {
    margin: 0 69px 0 3px;
}
.swing {
    margin: 0 17px 0 46px;
}
.tempo {
    flex: 1;
    margin-left: 9px;
}
.meter {
    font-family: "DejaVu Serif", serif;
    font-weight: bold;
    font-size: 20px;
    line-height: 14px;
}
.grip {
    position: absolute;
    left: 0;
    bottom: -5px;
    width: 18px;
    height: 18px;
    border-radius: 50%;
    background: #6b6a6f;
}
.speed .rate {
    width: 145px;
    gap: 22px;
    color: #c6c7ca;
}
.speed .rate input {
    width: 76px;
    color: #8b9097;
}
.speed .step {
    width: 35px;
}
.toolbar .tuner {
    width: 55px;
    border-radius: 12px 0 0 12px;
}
.titlebar {
    flex: none;
    height: 53px;
    padding-left: 880px;
    border-bottom: 2px solid #606064;
    background: #8c93a6;
    text-align: center;
    font-size: 28px;
    font-weight: bold;
    line-height: 54px;
}

/* Palette */
main {
    flex: 1;
    min-height: 0;
    display: flex;
}
.palette {
    flex: none;
    width: 499px;
    padding: 20px 18px 0 17px;
}
.voices, .texts {
    display: flex;
    justify-content: center;
    gap: 7px;
}
.voices .btn, .texts .btn {
    height: 52px;
}
.voices .btn {
    width: 52px;
    font-weight: bold;
}
.voices .active {
    background: #c9a27b;
}
.voices .design {
    margin-left: 4px;
}
.texts {
    gap: 13px;
    margin: 13px 0 25px;
}
.texts .lyrics {
    width: 154px;
    gap: 11px;
}
.texts .chords {
    width: 174px;
    gap: 4px;
}
section {
    display: grid;
    grid-template-columns: repeat(8, 58px);
    grid-auto-rows: 58px;
    justify-items: center;
    align-items: center;
    padding: 12px 0;
    border-top: 2px solid #8b92a6;
}
.tool {
    width: 56px;
    height: 56px;
    border-radius: 12px;
    white-space: nowrap;
}
.tool svg {
    display: block;
    width: 100%;
    height: 56px;
    overflow: visible;
}
.tool.on {
    background: #7894c8;
}
.tool:disabled {
    color: #7b838f;
}
.tool.wide {
    grid-column: span 2;
    width: 114px;
}
.dyn, .bold {
    display: flex;
    align-items: center;
    justify-content: center;
    padding-bottom: 3px;
    font-family: "Liberation Serif", serif;
    font-weight: bold;
}
.dyn {
    font-style: italic;
}

/* Score */
.score {
    position: relative;
    flex: 1;
    background: #c0c0c0;
    color: #5d5e63;
}
.system {
    display: block;
}
.lines {
    stroke: #85868a;
}
.bar-number {
    fill: #8d8e92;
}
.note-box {
    stroke-width: 3;
    fill: #b5b5b5;
}
.tab-box {
    stroke-width: 3;
    fill: #c2b8ae;
}
.gap {
    fill: #c0c0c0;
    stroke: none;
}
.cursor {
    position: absolute;
    left: 122px;
    top: 712px;
    fill: #000;
    stroke: #fff;
    stroke-width: 3;
    filter: drop-shadow(0 3px 3px rgba(0, 0, 0, .3));
}

/* Bend dialog */
.dialog {
    position: absolute;
    top: 638px;
    right: 117px;
    width: 1145px;
    padding: 0 26px 26px 25px;
    border-radius: 24px;
    background: #24252b;
    color: #f5f8fc;
    box-shadow: 0 0 2px #55565c, 0 30px 80px rgba(0, 0, 0, .4);
}
.dialog h2 {
    margin: 0 0 6px;
    font-size: 36px;
    line-height: 100px;
}
.panels {
    display: grid;
    grid-template-columns: 322px 1fr;
    gap: 20px;
}
.presets, .curve {
    height: 516px;
    background: #171b20;
}
.presets {
    display: flex;
    flex-direction: column;
    gap: 4px;
    padding: 2px 2px 156px;
}
.presets button {
    flex: 1;
    display: flex;
    align-items: center;
    gap: 11px;
    padding-left: 13px;
    border-radius: 10px;
}
.presets svg {
    width: 60px;
    height: 48px;
}
.presets .selected {
    background: #3a85ff;
}
.presets button:disabled {
    background: #313646;
    color: #4a4f5e;
}
.curve {
    width: 100%;
}
.grid {
    stroke: #505463;
}
.labels text {
    fill: #4e5263;
    text-anchor: start;
    font-size: 22px;
}
.point {
    fill: #3a85ff;
    stroke: none;
}
.actions {
    display: flex;
    gap: 31px;
    margin-top: 55px;
}
.actions button {
    height: 52px;
    padding: 2px 19px 0;
    border-radius: 12px;
    background: #4a5061;
}
.actions .reset {
    margin-right: auto;
}
.actions .ok {
    background: #3a85ff;
}
```
